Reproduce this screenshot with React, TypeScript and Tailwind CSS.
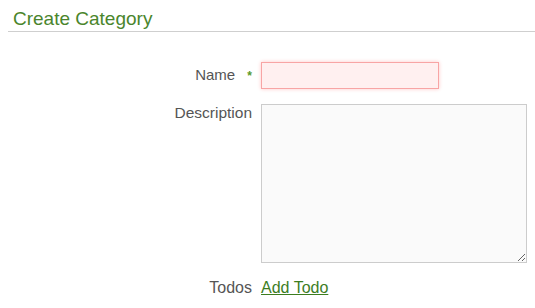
import React from "react";

const App = () => {
  return (
    <div className="w-[535px] h-[308px] bg-white font-['Liberation_Sans',Arial,sans-serif] overflow-hidden">
      <div className="pl-[8px] pt-[7px]">
        <h2 className="pl-[5px] pb-[1px] text-[19px] leading-[23px] text-[#4a852c] border-b border-[#cfcfcf]">
          Create Category
        </h2>
      </div>

      <form className="mt-[30px] flex flex-col">
        <div className="flex items-center">
          <label className="w-[253px] pr-[1px] text-right text-[15px] text-[#555]">
            Name <span className="ml-[8px] text-[#5a9a2a] font-bold text-[12px]">*</span>
          </label>
          <input
            type="text"
            className="ml-[8px] w-[178px] h-[27px] bg-[#fff0f0] border border-[#f8a5a5] shadow-[0_0_4px_#ffc8c8] outline-none"
          />
        </div>

        <div className="mt-[15px] flex items-start">
          <label className="w-[253px] pr-[1px] text-right text-[15.5px] leading-[18px] text-[#555]">
            Description
          </label>
          <textarea className="ml-[8px] w-[266px] h-[159px] bg-[#fafafa] border border-[#cccccc] outline-none" />
        </div>

        <div className="mt-[13px] flex items-center">
          <span className="w-[253px] pr-[1px] text-right text-[16px] text-[#555]">Todos</span>
          <a href="#" className="ml-[8px] text-[16px] text-[#3d7d1f] underline">
            Add Todo
          </a>
        </div>
      </form>
    </div>
  );
};

export default App;
